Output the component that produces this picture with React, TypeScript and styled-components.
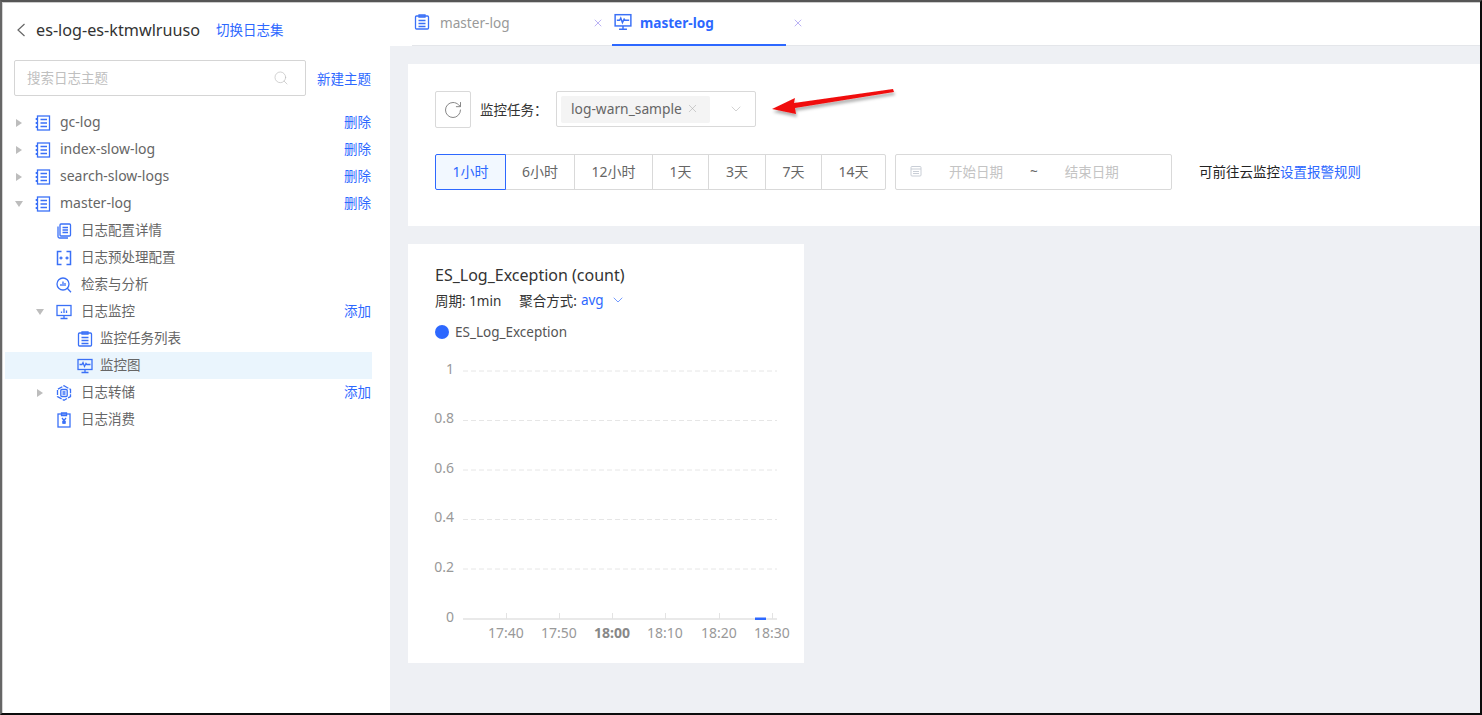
import React from 'react';
import styled, { createGlobalStyle } from 'styled-components';
import { ChevronDown, RotateCw, Search, X } from 'lucide-react';

const FONT = `"Noto Sans", "Noto Sans CJK SC", sans-serif`;
const BLUE = '#2d68ff';

const GlobalStyle = createGlobalStyle`
  html, body {
    margin: 0;
    padding: 0;
    background: #fff;
    overflow: hidden;
  }
  * {
    box-sizing: border-box;
  }
`;

const Frame = styled.div`
  position: relative;
  display: flex;
  width: 1482px;
  height: 715px;
  border-style: solid;
  border-color: #555 #0c0c0c #0c0c0c #666;
  border-width: 2px 2px 2px 2px;
  font-family: ${FONT};
  font-size: 13.5px;
  color: #333;
  background: #fff;
`;

const Sidebar = styled.aside`
  flex: 0 0 388px;
  padding: 0 18px 0 2px;
  border-top: 1px solid #ccc;
  border-left: 1px solid #d5d5d5;
`;

const SideHeader = styled.div`
  display: flex;
  align-items: center;
  height: 57px;
  padding: 0 0 3px 11px;
`;

const SetTitle = styled.span`
  margin-left: 10px;
  font-size: 16.2px;
  color: #333;
`;

const TextLink = styled.a`
  color: ${BLUE};
  cursor: pointer;
  white-space: nowrap;
`;

const SwitchLink = styled(TextLink)`
  margin: 0 0 2px 16px;
`;

const SearchRow = styled.div`
  display: flex;
  align-items: center;
  justify-content: space-between;
  padding: 0 1px 0 9px;
  margin-bottom: 13px;
`;

const SearchBox = styled.div`
  display: flex;
  align-items: center;
  justify-content: space-between;
  width: 292px;
  height: 36px;
  padding: 0 17px 2px 12px;
  border: 1px solid #d5d5d5;
  border-radius: 2px;
  color: #c0c0c0;
`;

const SearchGlyph = styled(Search)`
  margin: 2px -1px 0 0;
`;

const TreeRow = styled.div<{ $level: number; $active?: boolean }>`
  display: flex;
  align-items: center;
  height: 27px;
  padding: 0 1px 3px ${p => 7 + p.$level * 21}px;
  background: ${p => (p.$active ? '#eaf5fd' : 'transparent')};
  color: #666;
`;

const CaretSlot = styled.span`
  display: flex;
  align-items: center;
  justify-content: center;
  flex: 0 0 14px;
  margin: 3px 9px 0 0;
`;

const CaretRight = styled.i`
  width: 0;
  height: 0;
  border-style: solid;
  border-width: 4.5px 0 4.5px 6px;
  border-color: transparent transparent transparent #bdbdbd;
`;

const CaretDown = styled.i`
  width: 0;
  height: 0;
  border-style: solid;
  border-width: 6px 4.5px 0 4.5px;
  border-color: #bdbdbd transparent transparent transparent;
`;

const IconSlot = styled.span<{ $tight?: boolean }>`
  display: flex;
  flex: 0 0 16px;
  margin: 3px ${p => (p.$tight ? 7 : 9)}px 0 0;
`;

const RowLabel = styled.span<{ $mono?: boolean }>`
  flex: 1;
  font-size: ${p => (p.$mono ? 14 : 13.5)}px;
`;

const Main = styled.main`
  flex: 1;
  min-width: 0;
  background: #eef0f4;
`;

const TabBar = styled.div`
  display: flex;
  height: 44px;
  padding-left: 22px;
  background: #fff;
  border-top: 1px solid #ccc;
`;

const TabStrip = styled.div`
  display: flex;
  flex: 1;
  height: 43px;
  border-bottom: 1px solid #e4e6ea;
`;

const TabItem = styled.div`
  display: flex;
  align-items: center;
  width: 200px;
`;

const Tab = styled.div<{ $active?: boolean }>`
  display: flex;
  align-items: center;
  width: 174px;
  height: 43px;
  padding: 0 0 2px 2px;
  font-size: 13.6px;
  font-weight: ${p => (p.$active ? 700 : 400)};
  color: ${p => (p.$active ? BLUE : '#999')};
  border-bottom: 2px solid ${p => (p.$active ? BLUE : 'transparent')};
`;

const TabLabel = styled.span<{ $active?: boolean }>`
  margin-left: ${p => (p.$active ? 8 : 10)}px;
`;

const TabClose = styled.span`
  display: flex;
  margin: 0 0 2px 6px;
  color: #a49af0;
`;

const Content = styled.div`
  display: flex;
  flex-direction: column;
  gap: 18px;
  padding: 18px 0 0 18px;
`;

const Panel = styled.section`
  height: 162px;
  padding: 27px 0 0 27px;
  background: #fff;
`;

const ToolRow = styled.div`
  display: flex;
  align-items: center;
  height: 37px;
  margin-bottom: 26px;
`;

const RefreshButton = styled.button`
  display: flex;
  align-items: center;
  justify-content: center;
  width: 36px;
  height: 37px;
  padding: 0;
  border: 1px solid #d9d9d9;
  border-radius: 2px;
  background: #fff;
  color: #888;
`;

const FieldLabel = styled.span`
  width: 76px;
  margin: 0 0 2px 9px;
  color: #333;
`;

const Select = styled.div`
  display: flex;
  align-items: center;
  justify-content: space-between;
  width: 200px;
  height: 36px;
  margin-bottom: 1px;
  padding: 0 11px 0 4px;
  border: 1px solid #d9d9d9;
  border-radius: 2px;
`;

const Tag = styled.span`
  display: flex;
  align-items: center;
  gap: 4px;
  width: 149px;
  height: 27px;
  padding: 0 0 1px 10px;
  background: #f4f4f4;
  border-radius: 2px;
  color: #666;
  font-size: 13.8px;
`;

const RangeRow = styled.div`
  display: flex;
  align-items: center;
`;

const RangeGroup = styled.div`
  display: flex;
`;

const RangeButton = styled.div<{ $w: number; $active?: boolean }>`
  display: flex;
  align-items: center;
  justify-content: center;
  width: ${p => p.$w}px;
  height: 36px;
  margin-left: -1px;
  padding-bottom: 2px;
  border: 1px solid ${p => (p.$active ? BLUE : '#d9d9d9')};
  background: ${p => (p.$active ? '#f2f8ff' : '#fff')};
  color: ${p => (p.$active ? BLUE : '#666')};
  font-size: 14px;
  z-index: ${p => (p.$active ? 1 : 0)};
  &:first-child {
    margin-left: 0;
    border-radius: 2px 0 0 2px;
  }
  &:last-child {
    border-radius: 0 2px 2px 0;
  }
`;

const DateRange = styled.div`
  display: flex;
  align-items: center;
  width: 277px;
  height: 36px;
  margin-left: 9px;
  padding: 0 0 2px 14px;
  border: 1px solid #d9d9d9;
  border-radius: 2px;
  color: #c4c4c4;
`;

const DatePart = styled.span`
  width: 54px;
  margin-left: 27px;
`;

const Tilde = styled.span`
  margin-left: 27px;
  color: #666;
`;

const EndDate = styled(DatePart)`
  margin-left: 27px;
`;

const Hint = styled.span`
  margin: 0 0 2px 27px;
  color: #222;
`;

const ChartCard = styled.section`
  width: 396px;
  height: 419px;
  padding: 20px 0 0 27px;
  background: #fff;
`;

const ChartTitle = styled.div`
  font-size: 16px;
  line-height: 22px;
  color: #333;
`;

const ChartMeta = styled.div`
  display: flex;
  align-items: center;
  height: 24px;
  margin-top: 2px;
  color: #333;
`;

const MetaGap = styled.span`
  margin-left: 18px;
`;

const MetaValue = styled.span`
  margin-left: 4px;
  margin-right: 6px;
  color: ${BLUE};
`;

const MetaArrow = styled.span`
  display: flex;
  color: ${BLUE};
`;

const Legend = styled.div`
  display: flex;
  align-items: center;
  gap: 6px;
  height: 20px;
  margin-top: 10px;
  color: #555;
`;

const LegendDot = styled.i`
  width: 14px;
  height: 14px;
  border-radius: 50%;
  background: ${BLUE};
`;

const ChartSvg = styled.svg`
  display: block;
  margin: 8px 0 0 -27px;
  font-family: ${FONT};
  font-size: 14px;
`;

const ArrowOverlay = styled.svg`
  position: absolute;
  left: 758px;
  top: 78px;
  pointer-events: none;
`;

const icon = { width: 16, height: 16, viewBox: '0 0 16 16', fill: 'none', stroke: '#3a70f7', strokeWidth: 1.3 };

const ListIcon = () => (
  <svg {...icon}>
    <rect x="2.5" y="1" width="12" height="14" />
    <path d="M5.5 4.5h6.5M5.5 8h6.5M5.5 11.5h6.5" />
    <path d="M1.5 3v2M1.5 7v2M1.5 11v2" strokeWidth="1.6" />
  </svg>
);

const DetailIcon = () => (
  <svg {...icon}>
    <rect x="4" y="1" width="10.5" height="12" rx="1" />
    <path d="M2 3.5v10a1.5 1.5 0 0 0 1.5 1.5h8.5M6.5 4.5h5.5M6.5 7h5.5M6.5 9.5h5.5" />
  </svg>
);

const PreprocessIcon = () => (
  <svg {...icon}>
    <path d="M5.5 1.5h-4v13h4M10.5 1.5h4v13h-4" strokeWidth="1.5" />
    <path d="M3.5 8h3M5 6.5v3M9.5 8h3M11 6.5v3" />
  </svg>
);

const AnalyzeIcon = () => (
  <svg {...icon}>
    <circle cx="7" cy="7" r="6" />
    <path d="M11.3 11.3L15 15.2M5 9V7M7 9V4.5M9 9V6" />
  </svg>
);

const MonitorIcon = () => (
  <svg {...icon}>
    <rect x="1" y="1.5" width="14" height="10" />
    <path d="M8 11.5v3M4.5 14.5h7M5.5 9V7.5M8 9V4.5M10.5 9V6.5" />
  </svg>
);

const ClipboardIcon = () => (
  <svg {...icon}>
    <rect x="1.5" y="2" width="13" height="13" rx="1" />
    <path d="M5 1h6v2H5zM4.5 6.5h7M4.5 9.5h7M4.5 12.5h7" />
  </svg>
);

const WaveIcon = ({ size = 16 }: { size?: number }) => (
  <svg {...icon} width={size} height={size}>
    <rect x="1" y="1.5" width="14" height="10" />
    <path d="M8 11.5v3M4.5 14.5h7M2.5 6.5h2.5l1-2 1.5 4 1.5-3 .8 1h3.7" />
  </svg>
);

const DumpIcon = () => (
  <svg {...icon}>
    <path d="M8 .8l6.5 3.6v7.2L8 15.2l-6.5-3.6V4.4z" strokeDasharray="5 1.2" />
    <rect x="4.8" y="4.5" width="6.4" height="7" rx="1" />
    <path d="M6.5 7h3M6.5 9h3" />
  </svg>
);

const ConsumeIcon = () => (
  <svg {...icon}>
    <rect x="2" y="2" width="12" height="13" />
    <path d="M5.5 1h5v2.5h-5zM6 6l2 2.5L10 6M8 8.5V12M6.2 9.5h3.6M6.2 11h3.6" />
  </svg>
);

const BackIcon = () => (
  <svg width="10" height="14" viewBox="0 0 10 14" fill="none" stroke="#666" strokeWidth="1.2">
    <path d="M8.5 1L2 7l6.5 6" />
  </svg>
);

const CalendarIcon = () => (
  <svg width="12" height="12" viewBox="0 0 12 12" fill="none" stroke="#c9ced6">
    <rect x="1" y="1.5" width="10" height="9.5" rx="1" />
    <path d="M1 4h10M3 6.5h6M3 8.5h6" />
  </svg>
);

const TREE = [
  { level: 0, caret: 'right', Icon: ListIcon, label: 'gc-log', mono: true, action: '删除' },
  { level: 0, caret: 'right', Icon: ListIcon, label: 'index-slow-log', mono: true, action: '删除' },
  { level: 0, caret: 'right', Icon: ListIcon, label: 'search-slow-logs', mono: true, action: '删除' },
  { level: 0, caret: 'down', Icon: ListIcon, label: 'master-log', mono: true, action: '删除' },
  { level: 1, Icon: DetailIcon, label: '日志配置详情' },
  { level: 1, Icon: PreprocessIcon, label: '日志预处理配置' },
  { level: 1, Icon: AnalyzeIcon, label: '检索与分析' },
  { level: 1, caret: 'down', Icon: MonitorIcon, label: '日志监控', action: '添加' },
  { level: 2, Icon: ClipboardIcon, label: '监控任务列表', tight: true },
  { level: 2, Icon: WaveIcon, label: '监控图', tight: true, active: true },
  { level: 1, caret: 'right', Icon: DumpIcon, label: '日志转储', action: '添加' },
  { level: 1, Icon: ConsumeIcon, label: '日志消费' },
];

const RANGES = [
  { label: '1小时', w: 71, active: true },
  { label: '6小时', w: 70 },
  { label: '12小时', w: 79 },
  { label: '1天', w: 57 },
  { label: '3天', w: 58 },
  { label: '7天', w: 57 },
  { label: '14天', w: 65 },
];

const Y_TICKS = [
  { label: '1', y: 370.5 },
  { label: '0.8', y: 420 },
  { label: '0.6', y: 469.5 },
  { label: '0.4', y: 519 },
  { label: '0.2', y: 568.5 },
  { label: '0', y: 619 },
];

const X_TICKS = [
  { label: '17:40', x: 506 },
  { label: '17:50', x: 559 },
  { label: '18:00', x: 612, bold: true },
  { label: '18:10', x: 665 },
  { label: '18:20', x: 719 },
  { label: '18:30', x: 772 },
];

// chart top sits at y=350 and x=408 on the page
const Chart = () => (
  <ChartSvg width="396" height="300" viewBox="408 350 396 300">
    {Y_TICKS.map(t => (
      <g key={t.label}>
        <text x="454" y={t.y + 3} textAnchor="end" fill="#999">
          {t.label}
        </text>
        {t.label !== '0' && <path d={`M463 ${t.y + 0.5}H777`} stroke="#e6e6e6" strokeDasharray="5 3" />}
      </g>
    ))}
    <path d="M463 619H777" stroke="#e9e9e9" strokeWidth="2" />
    {X_TICKS.map(t => (
      <g key={t.label}>
        <path d={`M${t.x + 0.5} 613V619`} stroke="#e3e3e3" />
        <text x={t.x} y="638" textAnchor="middle" fill={t.bold ? '#888' : '#999'} fontWeight={t.bold ? 700 : 400}>
          {t.label}
        </text>
      </g>
    ))}
    <rect x="755" y="617.5" width="11" height="2.5" fill={BLUE} />
  </ChartSvg>
);

export default function App() {
  return (
    <Frame>
      <GlobalStyle />
      <Sidebar>
        <SideHeader>
          <BackIcon />
          <SetTitle>es-log-es-ktmwlruuso</SetTitle>
          <SwitchLink>切换日志集</SwitchLink>
        </SideHeader>
        <SearchRow>
          <SearchBox>
            <span>搜索日志主题</span>
            <SearchGlyph size={16} strokeWidth={1} color="#bbb" />
          </SearchBox>
          <TextLink>新建主题</TextLink>
        </SearchRow>
        {TREE.map(row => (
          <TreeRow key={row.label} $level={row.level} $active={row.active}>
            <CaretSlot>
              {row.caret === 'right' && <CaretRight />}
              {row.caret === 'down' && <CaretDown />}
            </CaretSlot>
            <IconSlot $tight={row.tight}>
              <row.Icon />
            </IconSlot>
            <RowLabel $mono={row.mono}>{row.label}</RowLabel>
            {row.action && <TextLink>{row.action}</TextLink>}
          </TreeRow>
        ))}
      </Sidebar>
      <Main>
        <TabBar>
          <TabStrip>
            <TabItem>
              <Tab>
                <ClipboardIcon />
                <TabLabel>master-log</TabLabel>
              </Tab>
              <TabClose>
                <X size={12} strokeWidth={1.5} />
              </TabClose>
            </TabItem>
            <TabItem>
              <Tab $active>
                <WaveIcon size={18} />
                <TabLabel $active>master-log</TabLabel>
              </Tab>
              <TabClose>
                <X size={12} strokeWidth={1.5} />
              </TabClose>
            </TabItem>
          </TabStrip>
        </TabBar>
        <Content>
          <Panel>
            <ToolRow>
              <RefreshButton>
                <RotateCw size={20} strokeWidth={1.2} />
              </RefreshButton>
              <FieldLabel>监控任务：</FieldLabel>
              <Select>
                <Tag>
                  log-warn_sample
                  <X size={13} strokeWidth={1} color="#aaa" />
                </Tag>
                <ChevronDown size={16} strokeWidth={1} color="#bbb" />
              </Select>
            </ToolRow>
            <RangeRow>
              <RangeGroup>
                {RANGES.map(r => (
                  <RangeButton key={r.label} $w={r.w} $active={r.active}>
                    {r.label}
                  </RangeButton>
                ))}
              </RangeGroup>
              <DateRange>
                <CalendarIcon />
                <DatePart>开始日期</DatePart>
                <Tilde>~</Tilde>
                <EndDate>结束日期</EndDate>
              </DateRange>
              <Hint>
                可前往云监控<TextLink>设置报警规则</TextLink>
              </Hint>
            </RangeRow>
          </Panel>
          <ChartCard>
            <ChartTitle>ES_Log_Exception (count)</ChartTitle>
            <ChartMeta>
              周期: 1min
              <MetaGap>聚合方式:</MetaGap>
              <MetaValue>avg</MetaValue>
              <MetaArrow>
                <ChevronDown size={16} strokeWidth={1} />
              </MetaArrow>
            </ChartMeta>
            <Legend>
              <LegendDot />
              ES_Log_Exception
            </Legend>
            <Chart />
          </ChartCard>
        </Content>
      </Main>
      <ArrowOverlay width="140" height="50" viewBox="760 80 140 50">
        <defs>
          <filter id="arrowShadow" x="-10%" y="-50%" width="120%" height="220%">
            <feDropShadow dx="1" dy="3" stdDeviation="1.5" floodColor="#000" floodOpacity="0.3" />
          </filter>
        </defs>
        <path d="M772 109L795 98L794 103L893 89L894 92L795 108L796 114Z" fill="#f01010" filter="url(#arrowShadow)" />
      </ArrowOverlay>
    </Frame>
  );
}
